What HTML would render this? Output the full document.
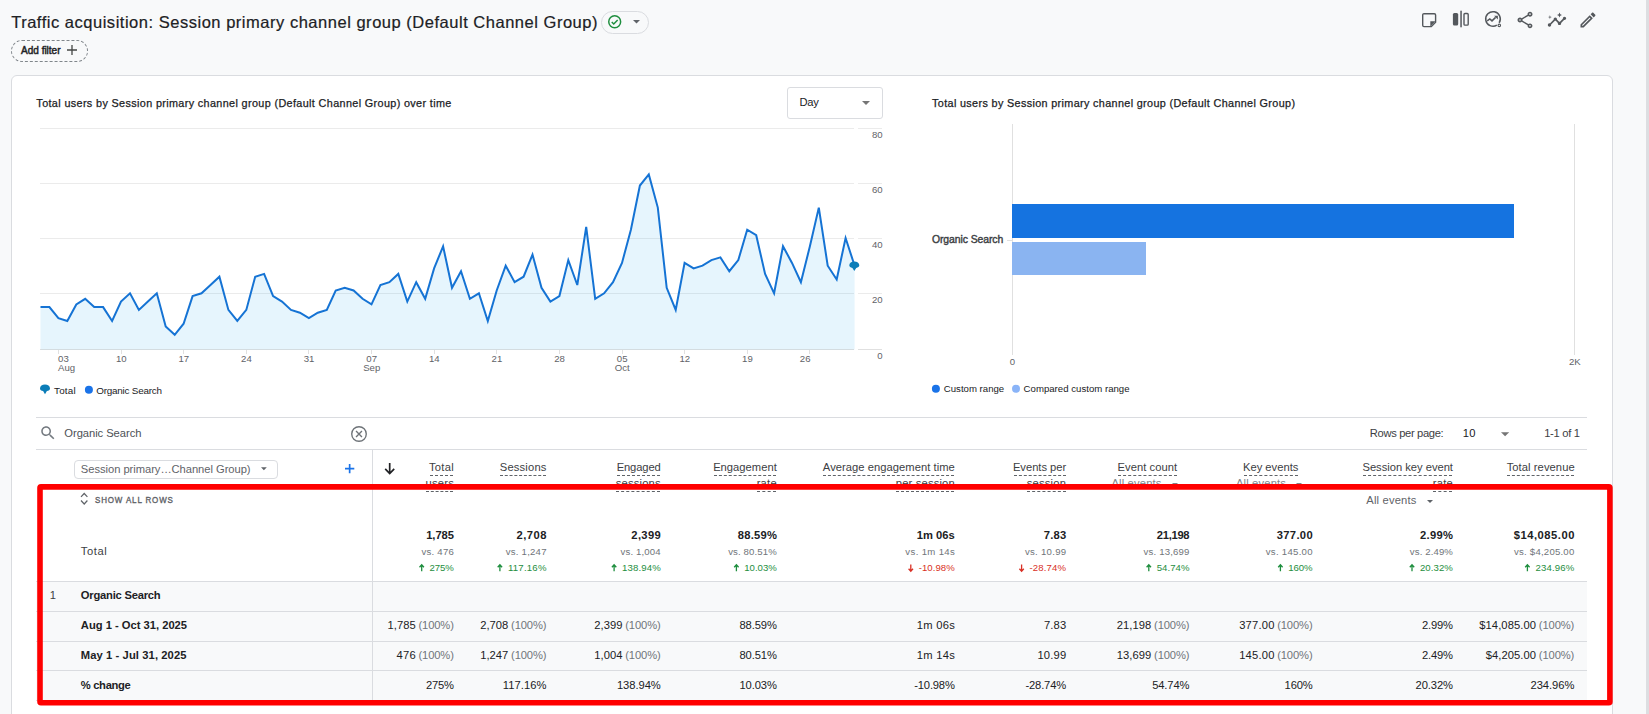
<!DOCTYPE html>
<html lang="en"><head><meta charset="utf-8"><title>Traffic acquisition</title>
<style>
html,body{margin:0;padding:0;}
body{width:1649px;height:714px;overflow:hidden;background:#f8f9fa;font-family:'Liberation Sans',sans-serif;position:relative;}
.abs{position:absolute;}
.t{position:absolute;white-space:pre;font-family:'Liberation Sans',sans-serif;}
.card{position:absolute;left:11px;top:75px;width:1600px;height:700px;background:#fff;border:1px solid #dadce0;border-radius:6px;}
.hl{position:absolute;height:1px;background:#e0e0e0;}
.vl{position:absolute;width:1px;background:#e0e0e0;}
.dash{position:absolute;height:0;border-top:1px dashed #5f6368;}
svg{position:absolute;overflow:visible;}
</style></head><body>
<div class="abs" style="left:1645.5px;top:0;width:4px;height:714px;background:#dddee1"></div>
<div class="abs" style="left:601px;top:11px;width:46px;height:21px;border:1px solid #dadce0;border-radius:12px;"></div>
<svg style="left:608.4px;top:15.1px" width="13.4" height="13.4" viewBox="0 0 20 20"><circle cx="10" cy="10" r="8.9" fill="none" stroke="#1e8e3e" stroke-width="2.2"/><path d="M5.6 10.3l3 3 5.8-6" fill="none" stroke="#1e8e3e" stroke-width="2.2"/></svg>
<svg style="left:632.5px;top:20.3px" width="7" height="3.6" viewBox="0 0 10 5"><path d="M0 0h10L5 5z" fill="#5f6368"/></svg>
<div class="abs" style="left:11.3px;top:40px;width:74.3px;height:19.5px;border:1px dashed #80868b;border-radius:11px;"></div>
<svg style="left:67px;top:45.4px" width="10" height="10" viewBox="0 0 10 10"><path d="M5 0v10M0 5h10" stroke="#444746" stroke-width="1.3" fill="none"/></svg>
<svg style="left:1421.6px;top:12.9px" width="14.3" height="14.3" viewBox="0 0 14.3 14.3"><path d="M2 0.700H12.300a1.300 1.300 0 0 1 1.300 1.300V9.300L9.300 13.600H2a1.300 1.300 0 0 1-1.300-1.300V2A1.300 1.300 0 0 1 2 0.700z" fill="none" stroke="#54585c" stroke-width="1.4"/><path d="M8.300 13.500V8.300H13.500z" fill="#54585c"/></svg>
<svg style="left:1450.6px;top:9.2px" width="20" height="20" viewBox="0 0 20 20"><rect x="1.900" y="4.100" width="5.300" height="12.500" rx="1.500" fill="#54585c"/><rect x="9.300" y="1.700" width="1.500" height="16.600" fill="#54585c"/><rect x="13" y="4.550" width="4.200" height="11.600" rx="1" fill="none" stroke="#54585c" stroke-width="1.400"/></svg>
<svg style="left:1482.5px;top:9.3px" width="20" height="20" viewBox="0 0 20 20"><path d="M16.190 13.870A7.300 7.300 0 1 0 13.870 16.190" fill="none" stroke="#54585c" stroke-width="1.500"/><circle cx="16.300" cy="16.400" r="1.250" fill="#f8f9fa" stroke="#54585c" stroke-width="1.100"/><path d="M4.200 11.900l2.600-2 2.200 2 3.600-3.500" fill="none" stroke="#54585c" stroke-width="1.500"/><path d="M11.100 6.800h3.800v3.800z" fill="#54585c"/></svg>
<svg style="left:1514.70px;top:9.50px" width="20" height="20" viewBox="0 0 24 24"><path d="M18 16.08c-.76 0-1.44.3-1.96.77L8.91 12.7c.05-.23.09-.46.09-.7s-.04-.47-.09-.7l7.05-4.11c.54.5 1.25.81 2.04.81 1.66 0 3-1.34 3-3s-1.34-3-3-3-3 1.34-3 3c0 .24.04.47.09.7L8.04 9.81C7.5 9.31 6.79 9 6 9c-1.66 0-3 1.34-3 3s1.34 3 3 3c.79 0 1.5-.31 2.04-.81l7.12 4.16c-.05.21-.08.43-.08.65 0 1.61 1.31 2.92 2.92 2.92s2.92-1.31 2.92-2.92c0-1.61-1.31-2.92-2.92-2.92zM18 4c.55 0 1 .45 1 1s-.45 1-1 1-1-.45-1-1 .45-1 1-1zM6 13c-.55 0-1-.45-1-1s.45-1 1-1 1 .45 1 1-.45 1-1 1zm12 7.02c-.55 0-1-.45-1-1s.45-1 1-1 1 .45 1 1-.45 1-1 1z" fill="#54585c"/></svg>
<svg style="left:1546.80px;top:9.80px" width="20" height="20" viewBox="0 0 24 24"><path d="M21 8c-1.45 0-2.26 1.44-1.93 2.51l-3.55 3.56c-.3-.09-.74-.09-1.04 0l-2.55-2.55C12.27 10.45 11.46 9 10 9c-1.45 0-2.27 1.44-1.93 2.52l-4.56 4.55C2.44 15.74 1 16.55 1 18c0 1.1.9 2 2 2 1.45 0 2.26-1.44 1.93-2.51l4.55-4.56c.3.09.74.09 1.04 0l2.55 2.55C12.73 16.55 13.54 18 15 18c1.45 0 2.27-1.44 1.93-2.52l3.56-3.55c1.07.33 2.51-.48 2.51-1.93 0-1.1-.9-2-2-2zM15 9l.94-2.07L18 6l-2.06-.93L15 3l-.92 2.07L12 6l2.08.93zM3.5 11L4 9l2-.5L4 8l-.5-2L3 8l-2 .5L3 9z" fill="#54585c"/></svg>
<svg style="left:1578.40px;top:9.50px" width="20" height="20" viewBox="0 0 24 24"><path d="M14.06 9.02l.92.92L5.92 19H5v-.92l9.06-9.06M17.66 3c-.25 0-.51.1-.7.29l-1.83 1.83 3.75 3.75 1.83-1.83c.39-.39.39-1.02 0-1.41l-2.34-2.34c-.2-.2-.45-.29-.71-.29zm-3.6 3.19L3 17.25V21h3.75L17.81 9.94l-3.75-3.75z" fill="#54585c"/></svg>
<div class="card"></div>
<div class="abs" style="left:787px;top:87px;width:94px;height:30px;border:1px solid #dadce0;border-radius:3px;background:#fff"></div>
<svg style="left:862.1px;top:100.9px" width="8" height="4.2" viewBox="0 0 10 5"><path d="M0 0h10L5 5z" fill="#757575"/></svg>
<div class="hl" style="left:40px;top:128px;width:814px;background:#ebebeb"></div>
<div class="hl" style="left:858px;top:128px;width:24px;background:#ebebeb"></div>
<div class="hl" style="left:40px;top:183px;width:814px;background:#ebebeb"></div>
<div class="hl" style="left:858px;top:183px;width:24px;background:#ebebeb"></div>
<div class="hl" style="left:40px;top:238px;width:814px;background:#ebebeb"></div>
<div class="hl" style="left:858px;top:238px;width:24px;background:#ebebeb"></div>
<div class="hl" style="left:40px;top:293px;width:814px;background:#ebebeb"></div>
<div class="hl" style="left:858px;top:293px;width:24px;background:#ebebeb"></div>
<div class="hl" style="left:40px;top:349px;width:814px;background:#e0e0e0"></div>
<div class="hl" style="left:858px;top:349px;width:24px;background:#e0e0e0"></div>
<svg style="left:0;top:0" width="1649" height="714" viewBox="0 0 1649 714"><polygon points="40.5,349.5 40.5,307.1 49.4,307.1 58.4,318.2 67.3,321.0 76.3,304.4 85.2,298.8 94.2,307.1 103.1,307.1 112.1,321.0 121.0,301.6 130.0,293.3 138.9,309.9 147.9,301.6 156.8,293.3 165.7,326.5 174.7,334.8 183.6,323.7 192.6,296.1 201.5,293.3 210.5,285.0 219.4,276.7 228.4,309.9 237.3,321.0 246.3,309.9 255.2,276.7 264.1,273.9 273.1,296.1 282.0,301.6 291.0,309.9 299.9,312.7 308.9,318.2 317.8,312.7 326.8,309.9 335.7,290.5 344.7,287.8 353.6,290.5 362.6,298.8 371.5,304.4 380.4,285.0 389.4,282.2 398.3,273.9 407.3,301.6 416.2,282.2 425.2,298.8 434.1,268.4 443.1,246.3 452.0,287.8 461.0,271.2 469.9,298.8 478.9,293.3 487.8,321.0 496.7,290.5 505.7,265.7 514.6,282.2 523.6,276.7 532.5,254.6 541.5,287.8 550.4,301.6 559.4,296.1 568.3,260.1 577.3,285.0 586.2,226.9 595.2,298.8 604.1,293.3 613.0,282.2 622.0,262.9 630.9,229.7 639.9,185.5 648.8,174.4 657.8,207.6 666.7,287.8 675.7,309.9 684.6,262.9 693.6,268.4 702.5,265.7 711.4,260.1 720.4,257.4 729.3,271.2 738.3,260.1 747.2,229.7 756.2,235.2 765.1,273.9 774.1,293.3 783.0,246.3 792.0,262.9 800.9,282.2 809.9,246.3 818.8,207.6 827.7,265.7 836.7,279.5 845.6,238.0 854.6,265.7 854.6,349.5" fill="rgb(5,155,235)" fill-opacity="0.1"/><polyline points="40.5,307.1 49.4,307.1 58.4,318.2 67.3,321.0 76.3,304.4 85.2,298.8 94.2,307.1 103.1,307.1 112.1,321.0 121.0,301.6 130.0,293.3 138.9,309.9 147.9,301.6 156.8,293.3 165.7,326.5 174.7,334.8 183.6,323.7 192.6,296.1 201.5,293.3 210.5,285.0 219.4,276.7 228.4,309.9 237.3,321.0 246.3,309.9 255.2,276.7 264.1,273.9 273.1,296.1 282.0,301.6 291.0,309.9 299.9,312.7 308.9,318.2 317.8,312.7 326.8,309.9 335.7,290.5 344.7,287.8 353.6,290.5 362.6,298.8 371.5,304.4 380.4,285.0 389.4,282.2 398.3,273.9 407.3,301.6 416.2,282.2 425.2,298.8 434.1,268.4 443.1,246.3 452.0,287.8 461.0,271.2 469.9,298.8 478.9,293.3 487.8,321.0 496.7,290.5 505.7,265.7 514.6,282.2 523.6,276.7 532.5,254.6 541.5,287.8 550.4,301.6 559.4,296.1 568.3,260.1 577.3,285.0 586.2,226.9 595.2,298.8 604.1,293.3 613.0,282.2 622.0,262.9 630.9,229.7 639.9,185.5 648.8,174.4 657.8,207.6 666.7,287.8 675.7,309.9 684.6,262.9 693.6,268.4 702.5,265.7 711.4,260.1 720.4,257.4 729.3,271.2 738.3,260.1 747.2,229.7 756.2,235.2 765.1,273.9 774.1,293.3 783.0,246.3 792.0,262.9 800.9,282.2 809.9,246.3 818.8,207.6 827.7,265.7 836.7,279.5 845.6,238.0 854.6,265.7" fill="none" stroke="#1573d4" stroke-width="2" stroke-linejoin="miter"/><path transform="translate(849.3,261.4)" d="M0 3.9C0 1.4 2.2 0 5 0s5 1.4 5 3.9c0 1.5-1.3 2.3-3.1 2.7L5 9.6 3.1 6.600C1.300 6.200 0 5.400 0 3.900z" fill="#0b7db8"/><path transform="translate(40,384.5)" d="M0 3.9C0 1.4 2.2 0 5 0s5 1.4 5 3.9c0 1.5-1.3 2.300-3.100 2.700L5 9.800 3.100 6.600C1.300 6.200 0 5.400 0 3.900z" fill="#0b7db8"/><circle cx="88.9" cy="389.7" r="4" fill="#1a73e8"/></svg>
<div class="vl" style="left:57.9px;top:350px;height:4px;background:#e0e0e0"></div>
<div class="vl" style="left:120.5px;top:350px;height:4px;background:#e0e0e0"></div>
<div class="vl" style="left:183.1px;top:350px;height:4px;background:#e0e0e0"></div>
<div class="vl" style="left:245.8px;top:350px;height:4px;background:#e0e0e0"></div>
<div class="vl" style="left:308.4px;top:350px;height:4px;background:#e0e0e0"></div>
<div class="vl" style="left:371.0px;top:350px;height:4px;background:#e0e0e0"></div>
<div class="vl" style="left:433.6px;top:350px;height:4px;background:#e0e0e0"></div>
<div class="vl" style="left:496.2px;top:350px;height:4px;background:#e0e0e0"></div>
<div class="vl" style="left:558.9px;top:350px;height:4px;background:#e0e0e0"></div>
<div class="vl" style="left:621.5px;top:350px;height:4px;background:#e0e0e0"></div>
<div class="vl" style="left:684.1px;top:350px;height:4px;background:#e0e0e0"></div>
<div class="vl" style="left:746.7px;top:350px;height:4px;background:#e0e0e0"></div>
<div class="vl" style="left:809.4px;top:350px;height:4px;background:#e0e0e0"></div>
<div class="vl" style="left:1012px;top:124px;height:231px;background:#e0e0e0"></div>
<div class="vl" style="left:1574px;top:124px;height:231px;background:#e0e0e0"></div>
<div class="hl" style="left:1007px;top:240px;width:5px;background:#e0e0e0"></div>
<div class="abs" style="left:1012px;top:204px;width:501.8px;height:33.7px;background:#1573e0"></div>
<div class="abs" style="left:1012px;top:242px;width:133.9px;height:32.7px;background:#8ab4f1"></div>
<svg style="left:0;top:0" width="1649" height="714" viewBox="0 0 1649 714"><circle cx="935.9" cy="388.8" r="4" fill="#1a73e8"/><circle cx="1016" cy="388.8" r="4" fill="#8ab4f8"/></svg>
<div class="hl" style="left:36px;top:417px;width:1551px;background:#dadce0"></div>
<div class="hl" style="left:36px;top:449px;width:1551px;background:#dadce0"></div>
<div class="abs" style="left:36px;top:582px;width:1551px;height:119px;background:#f8f9fa"></div>
<div class="hl" style="left:36px;top:581px;width:1551px;background:#dadce0"></div>
<div class="hl" style="left:36px;top:611px;width:1551px;background:#dadce0"></div>
<div class="hl" style="left:36px;top:641px;width:1551px;background:#dadce0"></div>
<div class="hl" style="left:36px;top:670px;width:1551px;background:#dadce0"></div>
<div class="hl" style="left:36px;top:700px;width:1551px;background:#dadce0"></div>
<div class="vl" style="left:372px;top:450px;height:251px;background:#dadce0"></div>
<svg style="left:39.30px;top:424.30px" width="18" height="18" viewBox="0 0 24 24"><path d="M15.5 14h-.79l-.28-.27C15.41 12.59 16 11.11 16 9.5 16 5.910 13.090 3 9.500 3S3 5.910 3 9.500 5.910 16 9.500 16c1.610 0 3.090-.59 4.230-1.570l.27.28v.79l5 4.990L20.490 19l-4.990-5zm-6 0C7.010 14 5 11.990 5 9.500S7.010 5 9.500 5 14 7.010 14 9.500 11.990 14 9.500 14z" fill="#747a80"/></svg>
<svg style="left:350.6px;top:425.5px" width="16" height="16" viewBox="0 0 20 20"><circle cx="10" cy="10" r="9.100" fill="none" stroke="#6e7378" stroke-width="1.700"/><path d="M6.300 6.300l7.400 7.400M13.700 6.300l-7.400 7.400" stroke="#6e7378" stroke-width="1.700" fill="none"/></svg>
<svg style="left:1501px;top:431.8px" width="8.2" height="4.4" viewBox="0 0 10 5"><path d="M0 0h10L5 5z" fill="#757575"/></svg>
<div class="abs" style="left:74.2px;top:460px;width:202px;height:16.6px;border:1px solid #dadce0;border-radius:4px;background:#fff"></div>
<svg style="left:260.9px;top:467.1px" width="5.8" height="3.6" viewBox="0 0 10 5"><path d="M0 0h10L5 5z" fill="#5f6368"/></svg>
<svg style="left:344.8px;top:464px" width="9.3" height="9.3" viewBox="0 0 10 10"><path d="M5 0v10M0 5h10" stroke="#1a73e8" stroke-width="1.800" fill="none"/></svg>
<svg style="left:0;top:0" width="1649" height="714" viewBox="0 0 1649 714"><path d="M389.700 462.900V473M385.200 468.900l4.500 4.700 4.500-4.700" fill="none" stroke="#202124" stroke-width="1.700"/></svg>
<div class="dash" style="left:429.5px;top:475.0px;width:23.9px"></div>
<div class="dash" style="left:426.0px;top:491.0px;width:27.4px"></div>
<div class="dash" style="left:500.4px;top:475.0px;width:45.6px"></div>
<div class="dash" style="left:617.2px;top:475.0px;width:43.0px"></div>
<div class="dash" style="left:616.4px;top:491.0px;width:43.8px"></div>
<div class="dash" style="left:713.7px;top:475.0px;width:62.6px"></div>
<div class="dash" style="left:757.2px;top:491.0px;width:19.1px"></div>
<div class="dash" style="left:823.4px;top:475.0px;width:130.9px"></div>
<div class="dash" style="left:896.4px;top:491.0px;width:57.9px"></div>
<div class="dash" style="left:1013.5px;top:475.0px;width:52.1px"></div>
<div class="dash" style="left:1027.3px;top:491.0px;width:38.3px"></div>
<div class="dash" style="left:1118.0px;top:475.0px;width:58.7px"></div>
<div class="dash" style="left:1243.5px;top:475.0px;width:54.3px"></div>
<div class="dash" style="left:1363.0px;top:475.0px;width:89.4px"></div>
<div class="dash" style="left:1433.4px;top:491.0px;width:19.0px"></div>
<div class="dash" style="left:1507.2px;top:475.0px;width:67.0px"></div>
<svg style="left:1172px;top:482.5px" width="6" height="3.2" viewBox="0 0 10 5"><path d="M0 0h10L5 5z" fill="#80868b"/></svg>
<svg style="left:1296.2px;top:482.5px" width="6" height="3.2" viewBox="0 0 10 5"><path d="M0 0h10L5 5z" fill="#80868b"/></svg>
<svg style="left:1426.9px;top:500px" width="6" height="3.2" viewBox="0 0 10 5"><path d="M0 0h10L5 5z" fill="#5f6368"/></svg>
<svg style="left:0;top:0" width="1649" height="714" viewBox="0 0 1649 714"><path d="M81 496.9l3.200-3.400 3.200 3.400M81 500.500l3.200 3.500 3.200-3.500" fill="none" stroke="#5f6368" stroke-width="1.2"/></svg>
<svg style="left:0;top:0" width="1649" height="714" viewBox="0 0 1649 714"><path d="M421.7 571.300v-6.600M419.5 567.200l2.200-2.500 2.200 2.500" fill="none" stroke="#1e8e3e" stroke-width="1.3"/><path d="M499.9 571.300v-6.600M497.7 567.200l2.200-2.500 2.200 2.500" fill="none" stroke="#1e8e3e" stroke-width="1.3"/><path d="M614.1 571.300v-6.600M611.9 567.200l2.200-2.500 2.200 2.500" fill="none" stroke="#1e8e3e" stroke-width="1.3"/><path d="M736.4 571.300v-6.600M734.2 567.200l2.200-2.500 2.200 2.500" fill="none" stroke="#1e8e3e" stroke-width="1.3"/><path d="M910.8 564.600v6.600M908.6 568.800l2.200 2.500 2.200-2.500" fill="none" stroke="#d93025" stroke-width="1.3"/><path d="M1021.6 564.600v6.600M1019.4 568.800l2.200 2.500 2.200-2.500" fill="none" stroke="#d93025" stroke-width="1.3"/><path d="M1148.8 571.300v-6.600M1146.6 567.200l2.200-2.500 2.200 2.500" fill="none" stroke="#1e8e3e" stroke-width="1.3"/><path d="M1280.4 571.300v-6.600M1278.2 567.200l2.200-2.500 2.200 2.500" fill="none" stroke="#1e8e3e" stroke-width="1.3"/><path d="M1412.0 571.300v-6.600M1409.8 567.200l2.200-2.500 2.200 2.500" fill="none" stroke="#1e8e3e" stroke-width="1.3"/><path d="M1527.4 571.300v-6.600M1525.2 567.200l2.200-2.500 2.200 2.500" fill="none" stroke="#1e8e3e" stroke-width="1.3"/></svg>
<svg style="left:0;top:0;z-index:10" width="1649" height="714" viewBox="0 0 1649 714"><rect x="40" y="486.85" width="1569.9" height="215.95" rx="1" fill="none" stroke="#ff0000" stroke-width="5.6" stroke-linejoin="round"/></svg>
<span class="t" style="left:11.18px;top:11.68px;font-size:16.5px;line-height:21px;color:#202124;letter-spacing:0.519px;-webkit-text-stroke:0.2px #202124;">Traffic acquisition: Session primary channel group (Default Channel Group)</span>
<span class="t" style="left:21.10px;top:44.23px;font-size:10px;line-height:13px;color:#202124;letter-spacing:-0.007px;-webkit-text-stroke:0.45px #202124;">Add filter</span>
<span class="t" style="left:36.36px;top:96.06px;font-size:10.8px;line-height:14px;color:#202124;letter-spacing:0.370px;-webkit-text-stroke:0.25px #202124;">Total users by Session primary channel group (Default Channel Group) over time</span>
<span class="t" style="left:799.44px;top:94.52px;font-size:11.2px;line-height:15px;color:#202124;letter-spacing:-0.195px;">Day</span>
<span class="t" style="left:872.01px;top:128.67px;font-size:9.6px;line-height:12px;color:#5f6368;">80</span>
<span class="t" style="left:872.01px;top:183.67px;font-size:9.6px;line-height:12px;color:#5f6368;">60</span>
<span class="t" style="left:872.01px;top:238.67px;font-size:9.6px;line-height:12px;color:#5f6368;">40</span>
<span class="t" style="left:872.01px;top:293.67px;font-size:9.6px;line-height:12px;color:#5f6368;">20</span>
<span class="t" style="left:877.34px;top:349.67px;font-size:9.6px;line-height:12px;color:#5f6368;">0</span>
<span class="t" style="left:58.12px;top:352.67px;font-size:9.6px;line-height:12px;color:#5f6368;">03</span>
<span class="t" style="left:58.12px;top:361.67px;font-size:9.6px;line-height:12px;color:#5f6368;">Aug</span>
<span class="t" style="left:115.88px;top:352.67px;font-size:9.6px;line-height:12px;color:#5f6368;">10</span>
<span class="t" style="left:178.50px;top:352.67px;font-size:9.6px;line-height:12px;color:#5f6368;">17</span>
<span class="t" style="left:241.12px;top:352.67px;font-size:9.6px;line-height:12px;color:#5f6368;">24</span>
<span class="t" style="left:303.74px;top:352.67px;font-size:9.6px;line-height:12px;color:#5f6368;">31</span>
<span class="t" style="left:366.37px;top:352.67px;font-size:9.6px;line-height:12px;color:#5f6368;">07</span>
<span class="t" style="left:363.16px;top:361.67px;font-size:9.6px;line-height:12px;color:#5f6368;">Sep</span>
<span class="t" style="left:428.99px;top:352.67px;font-size:9.6px;line-height:12px;color:#5f6368;">14</span>
<span class="t" style="left:491.61px;top:352.67px;font-size:9.6px;line-height:12px;color:#5f6368;">21</span>
<span class="t" style="left:554.23px;top:352.67px;font-size:9.6px;line-height:12px;color:#5f6368;">28</span>
<span class="t" style="left:616.85px;top:352.67px;font-size:9.6px;line-height:12px;color:#5f6368;">05</span>
<span class="t" style="left:614.72px;top:361.67px;font-size:9.6px;line-height:12px;color:#5f6368;">Oct</span>
<span class="t" style="left:679.48px;top:352.67px;font-size:9.6px;line-height:12px;color:#5f6368;">12</span>
<span class="t" style="left:742.10px;top:352.67px;font-size:9.6px;line-height:12px;color:#5f6368;">19</span>
<span class="t" style="left:799.81px;top:352.67px;font-size:9.6px;line-height:12px;color:#5f6368;">26</span>
<span class="t" style="left:54.11px;top:383.57px;font-size:9.9px;line-height:13px;color:#202124;letter-spacing:0.166px;">Total</span>
<span class="t" style="left:96.20px;top:383.57px;font-size:9.9px;line-height:13px;color:#202124;letter-spacing:-0.209px;">Organic Search</span>
<span class="t" style="left:932.06px;top:96.16px;font-size:10.8px;line-height:14px;color:#202124;letter-spacing:0.356px;-webkit-text-stroke:0.25px #202124;">Total users by Session primary channel group (Default Channel Group)</span>
<span class="t" style="left:931.88px;top:233.30px;font-size:10.4px;line-height:14px;color:#3c4043;letter-spacing:-0.062px;-webkit-text-stroke:0.4px #3c4043;">Organic Search</span>
<span class="t" style="left:1009.83px;top:355.77px;font-size:9.6px;line-height:12px;color:#5f6368;">0</span>
<span class="t" style="left:1568.92px;top:355.77px;font-size:9.6px;line-height:12px;color:#5f6368;">2K</span>
<span class="t" style="left:943.82px;top:382.87px;font-size:9.6px;line-height:12px;color:#202124;letter-spacing:0.008px;">Custom range</span>
<span class="t" style="left:1023.62px;top:382.87px;font-size:9.6px;line-height:12px;color:#202124;letter-spacing:0.017px;">Compared custom range</span>
<span class="t" style="left:64.34px;top:425.62px;font-size:11.2px;line-height:15px;color:#4d5156;letter-spacing:-0.051px;">Organic Search</span>
<span class="t" style="left:1369.84px;top:425.92px;font-size:11.2px;line-height:15px;color:#3c4043;letter-spacing:-0.346px;">Rows per page:</span>
<span class="t" style="left:1462.74px;top:425.92px;font-size:11.2px;line-height:15px;color:#202124;letter-spacing:0.183px;">10</span>
<span class="t" style="left:1544.14px;top:425.92px;font-size:11.2px;line-height:15px;color:#3c4043;letter-spacing:-0.292px;">1-1 of 1</span>
<span class="t" style="left:80.84px;top:461.62px;font-size:11.2px;line-height:15px;color:#5f6368;letter-spacing:-0.043px;">Session primary…Channel Group)</span>
<span class="t" style="left:428.94px;top:460.02px;font-size:11.2px;line-height:15px;color:#3c4043;letter-spacing:0.276px;">Total</span>
<span class="t" style="left:425.44px;top:476.02px;font-size:11.2px;line-height:15px;color:#3c4043;letter-spacing:0.232px;">users</span>
<span class="t" style="left:499.84px;top:460.02px;font-size:11.2px;line-height:15px;color:#3c4043;letter-spacing:0.164px;">Sessions</span>
<span class="t" style="left:616.64px;top:460.02px;font-size:11.2px;line-height:15px;color:#3c4043;letter-spacing:-0.097px;">Engaged</span>
<span class="t" style="left:615.84px;top:476.02px;font-size:11.2px;line-height:15px;color:#3c4043;letter-spacing:0.174px;">sessions</span>
<span class="t" style="left:713.14px;top:460.02px;font-size:11.2px;line-height:15px;color:#3c4043;letter-spacing:0.027px;">Engagement</span>
<span class="t" style="left:756.64px;top:476.02px;font-size:11.2px;line-height:15px;color:#3c4043;letter-spacing:0.235px;">rate</span>
<span class="t" style="left:822.84px;top:460.02px;font-size:11.2px;line-height:15px;color:#3c4043;letter-spacing:0.043px;">Average engagement time</span>
<span class="t" style="left:895.84px;top:476.02px;font-size:11.2px;line-height:15px;color:#3c4043;letter-spacing:0.164px;">per session</span>
<span class="t" style="left:1012.94px;top:460.02px;font-size:11.2px;line-height:15px;color:#3c4043;letter-spacing:-0.026px;">Events per</span>
<span class="t" style="left:1026.74px;top:476.02px;font-size:11.2px;line-height:15px;color:#3c4043;letter-spacing:0.212px;">session</span>
<span class="t" style="left:1117.44px;top:460.02px;font-size:11.2px;line-height:15px;color:#3c4043;letter-spacing:0.066px;">Event count</span>
<span class="t" style="left:1242.94px;top:460.02px;font-size:11.2px;line-height:15px;color:#3c4043;letter-spacing:0.006px;">Key events</span>
<span class="t" style="left:1362.44px;top:460.02px;font-size:11.2px;line-height:15px;color:#3c4043;letter-spacing:-0.016px;">Session key event</span>
<span class="t" style="left:1432.84px;top:476.02px;font-size:11.2px;line-height:15px;color:#3c4043;letter-spacing:0.210px;">rate</span>
<span class="t" style="left:1506.64px;top:460.02px;font-size:11.2px;line-height:15px;color:#3c4043;letter-spacing:0.073px;">Total revenue</span>
<span class="t" style="left:1111.44px;top:476.22px;font-size:11.2px;line-height:15px;color:#80868b;letter-spacing:0.160px;">All events</span>
<span class="t" style="left:1235.94px;top:476.22px;font-size:11.2px;line-height:15px;color:#80868b;letter-spacing:0.160px;">All events</span>
<span class="t" style="left:1366.34px;top:493.22px;font-size:11.2px;line-height:15px;color:#5f6368;letter-spacing:0.160px;">All events</span>
<span class="t" style="left:95.12px;top:494.17px;font-size:9.6px;line-height:12px;color:#5f6368;-webkit-text-stroke:0.4px #5f6368;letter-spacing:1.05px;transform:scaleX(0.83);transform-origin:0 50%;">SHOW ALL ROWS</span>
<span class="t" style="left:80.84px;top:543.62px;font-size:11.2px;line-height:15px;color:#3c4043;letter-spacing:0.596px;">Total</span>
<span class="t" style="left:426.18px;top:527.62px;font-size:11.2px;line-height:15px;color:#202124;font-weight:700;letter-spacing:-0.056px;">1,785</span>
<span class="t" style="left:421.38px;top:545.97px;font-size:9.6px;line-height:12px;color:#70757a;letter-spacing:0.260px;">vs. 476</span>
<span class="t" style="left:429.47px;top:561.97px;font-size:9.6px;line-height:12px;color:#1e8e3e;letter-spacing:-0.047px;">275%</span>
<span class="t" style="left:516.46px;top:527.62px;font-size:11.2px;line-height:15px;color:#202124;font-weight:700;letter-spacing:0.524px;">2,708</span>
<span class="t" style="left:505.83px;top:545.97px;font-size:9.6px;line-height:12px;color:#70757a;letter-spacing:0.214px;">vs. 1,247</span>
<span class="t" style="left:507.95px;top:561.97px;font-size:9.6px;line-height:12px;color:#1e8e3e;letter-spacing:0.227px;">117.16%</span>
<span class="t" style="left:631.30px;top:527.62px;font-size:11.2px;line-height:15px;color:#202124;font-weight:700;letter-spacing:0.364px;">2,399</span>
<span class="t" style="left:620.48px;top:545.97px;font-size:9.6px;line-height:12px;color:#70757a;letter-spacing:0.158px;">vs. 1,004</span>
<span class="t" style="left:622.05px;top:561.97px;font-size:9.6px;line-height:12px;color:#1e8e3e;letter-spacing:0.126px;">138.94%</span>
<span class="t" style="left:737.85px;top:527.62px;font-size:11.2px;line-height:15px;color:#202124;font-weight:700;letter-spacing:0.211px;">88.59%</span>
<span class="t" style="left:728.15px;top:545.97px;font-size:9.6px;line-height:12px;color:#70757a;letter-spacing:0.129px;">vs. 80.51%</span>
<span class="t" style="left:744.22px;top:561.97px;font-size:9.6px;line-height:12px;color:#1e8e3e;">10.03%</span>
<span class="t" style="left:916.68px;top:527.62px;font-size:11.2px;line-height:15px;color:#202124;font-weight:700;letter-spacing:0.044px;">1m 06s</span>
<span class="t" style="left:905.36px;top:545.97px;font-size:9.6px;line-height:12px;color:#70757a;letter-spacing:0.337px;">vs. 1m 14s</span>
<span class="t" style="left:918.68px;top:561.97px;font-size:9.6px;line-height:12px;color:#d93025;letter-spacing:0.061px;">-10.98%</span>
<span class="t" style="left:1043.82px;top:527.62px;font-size:11.2px;line-height:15px;color:#202124;font-weight:700;letter-spacing:0.185px;">7.83</span>
<span class="t" style="left:1024.99px;top:545.97px;font-size:9.6px;line-height:12px;color:#70757a;letter-spacing:0.269px;">vs. 10.99</span>
<span class="t" style="left:1029.55px;top:561.97px;font-size:9.6px;line-height:12px;color:#d93025;letter-spacing:0.132px;">-28.74%</span>
<span class="t" style="left:1156.84px;top:527.62px;font-size:11.2px;line-height:15px;color:#202124;font-weight:700;letter-spacing:-0.300px;">21,198</span>
<span class="t" style="left:1143.51px;top:545.97px;font-size:9.6px;line-height:12px;color:#70757a;letter-spacing:0.188px;">vs. 13,699</span>
<span class="t" style="left:1156.67px;top:561.97px;font-size:9.6px;line-height:12px;color:#1e8e3e;letter-spacing:0.052px;">54.74%</span>
<span class="t" style="left:1276.69px;top:527.62px;font-size:11.2px;line-height:15px;color:#202124;font-weight:700;letter-spacing:0.350px;">377.00</span>
<span class="t" style="left:1265.80px;top:545.97px;font-size:9.6px;line-height:12px;color:#70757a;letter-spacing:0.278px;">vs. 145.00</span>
<span class="t" style="left:1288.17px;top:561.97px;font-size:9.6px;line-height:12px;color:#1e8e3e;letter-spacing:-0.047px;">160%</span>
<span class="t" style="left:1420.04px;top:527.62px;font-size:11.2px;line-height:15px;color:#202124;font-weight:700;letter-spacing:0.297px;">2.99%</span>
<span class="t" style="left:1409.83px;top:545.97px;font-size:9.6px;line-height:12px;color:#70757a;letter-spacing:0.113px;">vs. 2.49%</span>
<span class="t" style="left:1419.91px;top:561.97px;font-size:9.6px;line-height:12px;color:#1e8e3e;letter-spacing:0.086px;">20.32%</span>
<span class="t" style="left:1513.75px;top:527.62px;font-size:11.2px;line-height:15px;color:#202124;font-weight:700;letter-spacing:0.512px;">$14,085.00</span>
<span class="t" style="left:1514.04px;top:545.97px;font-size:9.6px;line-height:12px;color:#70757a;letter-spacing:0.219px;">vs. $4,205.00</span>
<span class="t" style="left:1535.39px;top:561.97px;font-size:9.6px;line-height:12px;color:#1e8e3e;letter-spacing:0.169px;">234.96%</span>
<span class="t" style="left:49.74px;top:587.62px;font-size:11.2px;line-height:15px;color:#3c4043;">1</span>
<span class="t" style="left:80.84px;top:587.62px;font-size:11.2px;line-height:15px;color:#202124;font-weight:700;letter-spacing:-0.220px;">Organic Search</span>
<span class="t" style="left:80.84px;top:617.62px;font-size:11.2px;line-height:15px;color:#202124;font-weight:700;letter-spacing:-0.005px;">Aug 1 - Oct 31, 2025</span>
<span class="t" style="left:80.84px;top:647.62px;font-size:11.2px;line-height:15px;color:#202124;font-weight:700;letter-spacing:0.093px;">May 1 - Jul 31, 2025</span>
<span class="t" style="left:80.84px;top:677.62px;font-size:11.2px;line-height:15px;color:#202124;font-weight:700;letter-spacing:-0.327px;">% change</span>
<span class="t" style="left:418.43px;top:617.62px;font-size:11.2px;line-height:15px;color:#70757a;letter-spacing:-0.110px;">(100%)</span>
<span class="t" style="left:387.56px;top:617.62px;font-size:11.2px;line-height:15px;color:#202124;letter-spacing:0.024px;">1,785</span>
<span class="t" style="left:511.03px;top:617.62px;font-size:11.2px;line-height:15px;color:#70757a;letter-spacing:-0.110px;">(100%)</span>
<span class="t" style="left:480.16px;top:617.62px;font-size:11.2px;line-height:15px;color:#202124;letter-spacing:0.024px;">2,708</span>
<span class="t" style="left:625.23px;top:617.62px;font-size:11.2px;line-height:15px;color:#70757a;letter-spacing:-0.110px;">(100%)</span>
<span class="t" style="left:594.36px;top:617.62px;font-size:11.2px;line-height:15px;color:#202124;letter-spacing:0.024px;">2,399</span>
<span class="t" style="left:739.45px;top:617.62px;font-size:11.2px;line-height:15px;color:#202124;letter-spacing:-0.108px;">88.59%</span>
<span class="t" style="left:916.87px;top:617.62px;font-size:11.2px;line-height:15px;color:#202124;letter-spacing:0.260px;">1m 06s</span>
<span class="t" style="left:1043.88px;top:617.62px;font-size:11.2px;line-height:15px;color:#202124;letter-spacing:0.166px;">7.83</span>
<span class="t" style="left:1154.03px;top:617.62px;font-size:11.2px;line-height:15px;color:#70757a;letter-spacing:-0.110px;">(100%)</span>
<span class="t" style="left:1116.75px;top:617.62px;font-size:11.2px;line-height:15px;color:#202124;letter-spacing:0.058px;">21,198</span>
<span class="t" style="left:1277.13px;top:617.62px;font-size:11.2px;line-height:15px;color:#70757a;letter-spacing:-0.110px;">(100%)</span>
<span class="t" style="left:1239.21px;top:617.62px;font-size:11.2px;line-height:15px;color:#202124;letter-spacing:0.186px;">377.00</span>
<span class="t" style="left:1421.93px;top:617.62px;font-size:11.2px;line-height:15px;color:#202124;letter-spacing:-0.175px;">2.99%</span>
<span class="t" style="left:1538.83px;top:617.62px;font-size:11.2px;line-height:15px;color:#70757a;letter-spacing:-0.110px;">(100%)</span>
<span class="t" style="left:1479.23px;top:617.62px;font-size:11.2px;line-height:15px;color:#202124;letter-spacing:0.092px;">$14,085.00</span>
<span class="t" style="left:418.43px;top:647.62px;font-size:11.2px;line-height:15px;color:#70757a;letter-spacing:-0.110px;">(100%)</span>
<span class="t" style="left:396.49px;top:647.62px;font-size:11.2px;line-height:15px;color:#202124;letter-spacing:0.251px;">476</span>
<span class="t" style="left:511.03px;top:647.62px;font-size:11.2px;line-height:15px;color:#70757a;letter-spacing:-0.110px;">(100%)</span>
<span class="t" style="left:480.16px;top:647.62px;font-size:11.2px;line-height:15px;color:#202124;letter-spacing:0.024px;">1,247</span>
<span class="t" style="left:625.23px;top:647.62px;font-size:11.2px;line-height:15px;color:#70757a;letter-spacing:-0.110px;">(100%)</span>
<span class="t" style="left:594.36px;top:647.62px;font-size:11.2px;line-height:15px;color:#202124;letter-spacing:0.024px;">1,004</span>
<span class="t" style="left:739.45px;top:647.62px;font-size:11.2px;line-height:15px;color:#202124;letter-spacing:-0.108px;">80.51%</span>
<span class="t" style="left:916.87px;top:647.62px;font-size:11.2px;line-height:15px;color:#202124;letter-spacing:0.260px;">1m 14s</span>
<span class="t" style="left:1037.45px;top:647.62px;font-size:11.2px;line-height:15px;color:#202124;letter-spacing:0.178px;">10.99</span>
<span class="t" style="left:1154.03px;top:647.62px;font-size:11.2px;line-height:15px;color:#70757a;letter-spacing:-0.110px;">(100%)</span>
<span class="t" style="left:1116.75px;top:647.62px;font-size:11.2px;line-height:15px;color:#202124;letter-spacing:0.058px;">13,699</span>
<span class="t" style="left:1277.13px;top:647.62px;font-size:11.2px;line-height:15px;color:#70757a;letter-spacing:-0.110px;">(100%)</span>
<span class="t" style="left:1239.21px;top:647.62px;font-size:11.2px;line-height:15px;color:#202124;letter-spacing:0.186px;">145.00</span>
<span class="t" style="left:1421.93px;top:647.62px;font-size:11.2px;line-height:15px;color:#202124;letter-spacing:-0.175px;">2.49%</span>
<span class="t" style="left:1538.83px;top:647.62px;font-size:11.2px;line-height:15px;color:#70757a;letter-spacing:-0.110px;">(100%)</span>
<span class="t" style="left:1485.66px;top:647.62px;font-size:11.2px;line-height:15px;color:#202124;letter-spacing:0.077px;">$4,205.00</span>
<span class="t" style="left:425.92px;top:677.62px;font-size:11.2px;line-height:15px;color:#202124;letter-spacing:-0.196px;">275%</span>
<span class="t" style="left:502.87px;top:677.62px;font-size:11.2px;line-height:15px;color:#202124;letter-spacing:0.058px;">117.16%</span>
<span class="t" style="left:616.95px;top:677.62px;font-size:11.2px;line-height:15px;color:#202124;letter-spacing:-0.060px;">138.94%</span>
<span class="t" style="left:739.45px;top:677.62px;font-size:11.2px;line-height:15px;color:#202124;letter-spacing:-0.108px;">10.03%</span>
<span class="t" style="left:914.22px;top:677.62px;font-size:11.2px;line-height:15px;color:#202124;letter-spacing:-0.171px;">-10.98%</span>
<span class="t" style="left:1025.52px;top:677.62px;font-size:11.2px;line-height:15px;color:#202124;letter-spacing:-0.171px;">-28.74%</span>
<span class="t" style="left:1152.15px;top:677.62px;font-size:11.2px;line-height:15px;color:#202124;letter-spacing:-0.108px;">54.74%</span>
<span class="t" style="left:1284.62px;top:677.62px;font-size:11.2px;line-height:15px;color:#202124;letter-spacing:-0.196px;">160%</span>
<span class="t" style="left:1415.55px;top:677.62px;font-size:11.2px;line-height:15px;color:#202124;letter-spacing:-0.108px;">20.32%</span>
<span class="t" style="left:1530.55px;top:677.62px;font-size:11.2px;line-height:15px;color:#202124;letter-spacing:-0.060px;">234.96%</span>
</body></html>
